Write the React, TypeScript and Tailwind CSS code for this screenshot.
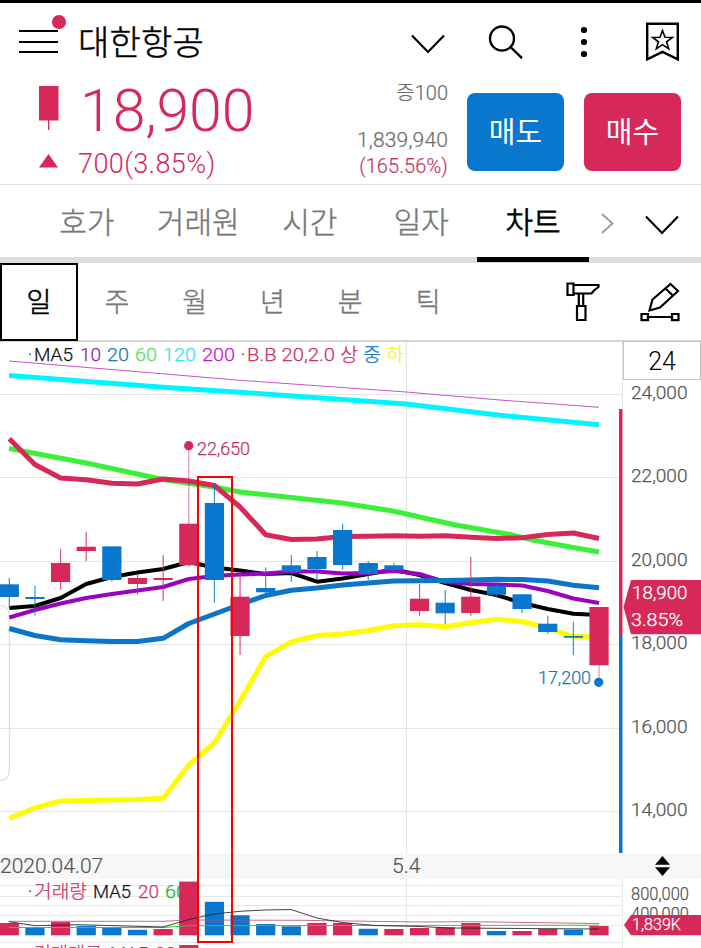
import React from 'react';

const RED = '#d62859';
const BLUE = '#0877cd';

const FONT = "font-['Roboto','Noto_Sans_CJK_KR',sans-serif]";

type Candle = {
  up: boolean;
  high: number;
  top: number;
  bottom: number;
  low: number;
  volume: number;
};

const c = (up: boolean, high: number, top: number, bottom: number, low: number, volume: number): Candle => ({
  up,
  high,
  top,
  bottom,
  low,
  volume,
});

// Vertical positions are in chart pixels, volume is the bar height
const CANDLES: Candle[] = [
  c(false, 578, 584.3, 597, 608, 12.3),
  c(false, 586, 597, 599, 615.5, 7.3),
  c(true, 549, 563, 582, 590, 13.3),
  c(true, 532, 546.7, 551, 561, 9.3),
  c(false, 546.4, 546.4, 580, 581.7, 7.3),
  c(true, 574, 578, 584, 594.7, 5.5),
  c(true, 555, 578, 580, 601, 6.3),
  c(true, 446, 523.7, 565.3, 567.3, 53.7),
  c(false, 484, 503, 580, 602.7, 33.5),
  c(true, 573, 596.7, 636, 655, 20),
  c(false, 567.3, 588, 592.3, 593, 11.3),
  c(false, 555, 565.3, 572, 582, 9),
  c(false, 551, 557, 569, 580, 12.3),
  c(false, 523.7, 530, 565, 569.5, 12.3),
  c(false, 561, 563, 574, 580, 6.5),
  c(false, 563, 565.3, 570, 572, 6.3),
  c(true, 584, 598.7, 611, 615.7, 7.3),
  c(false, 590, 602.7, 613.3, 623.7, 8),
  c(true, 557, 596.7, 613, 615.7, 12.3),
  c(false, 584, 586, 594.7, 596.5, 4.3),
  c(false, 594.3, 594.3, 609, 613, 4.3),
  c(false, 615.7, 623.7, 632, 634, 6.3),
  c(false, 621.7, 636, 637.7, 655, 5.7),
  c(true, 607, 607, 665.3, 682, 9.3),
];

const VOLUME_UP = [0, 2, 6, 7, 12, 13, 15, 16, 17, 18, 20, 21, 23];

const cx = (i: number) => 9.3 + i * 25.64;

const series = (ys: number[]) => ys.map((y, i) => `${cx(i).toFixed(1)},${y}`).join(' ');

const LINES = [
  {
    id: 'ma200',
    color: '#c455c8',
    width: 1,
    points: '9,361 157,373.3 240,380.3 406,392 500,400 599,407.3',
  },
  {
    id: 'ma120',
    color: '#00f6ff',
    width: 5,
    points: '9,375.6 163,387.3 240,392.3 406,404 500,415.3 599,424.7',
  },
  {
    id: 'ma60',
    color: '#3bf036',
    width: 5,
    points:
      '9,448.5 86,463 163,479.5 214,487 240,492 291,497.5 342,503 393,511 453,524.5 510,534.5 535,540.5 573,547.5 599,552',
  },
  {
    id: 'upper',
    color: RED,
    width: 5,
    points: series([
      438.7, 464.5, 478, 479.7, 483.3, 484, 479, 481, 485.5, 507, 534.7, 539.5, 539, 536.5, 536.3, 535.7, 536.3, 535.7,
      537.3, 538.5, 537.7, 534.5, 533, 538.5,
    ]),
  },
  {
    id: 'lower',
    color: '#fffb00',
    width: 5,
    points: series([
      818.3, 808, 801, 800.5, 800, 799.5, 798.3, 765, 743, 701, 656.7, 642, 635.5, 634, 630.5, 625.7, 624.7, 626.7, 622.7,
      619.3, 621.5, 628, 636.5, 637,
    ]),
  },
  {
    id: 'ma5',
    color: '#000000',
    width: 4,
    points: series([
      608, 606, 598, 584, 577, 572.5, 569, 562, 567.5, 570.5, 574, 573, 581.7, 578.5, 574, 569.5, 575, 583, 590, 595, 603,
      609, 613.7, 615,
    ]),
  },
  {
    id: 'ma10',
    color: '#9803c0',
    width: 4,
    points: series([
      617.5, 610, 603.5, 598, 594, 590.5, 587, 579, 576, 574.5, 573.5, 571.5, 571.5, 573.5, 573, 571, 574, 582, 584, 584.5,
      585.5, 591, 598.5, 603,
    ]),
  },
  {
    id: 'ma20',
    color: '#0d75c8',
    width: 5,
    points: series([
      628.5, 635.5, 639.7, 640.7, 641.5, 641.5, 638.3, 623.5, 614, 604.5, 595.5, 590.3, 588, 585, 583, 581, 580.7, 580.5,
      580, 579.3, 579.5, 581, 585.3, 587.7,
    ]),
  },
];

const PRICE_TICKS = [
  { label: '24,000', y: 394.4 },
  { label: '22,000', y: 477.6 },
  { label: '20,000', y: 561.2 },
  { label: '18,000', y: 644.5 },
  { label: '16,000', y: 728.3 },
  { label: '14,000', y: 811.4 },
];

const LEGEND = [
  { text: '·', x: 28, width: 4, color: '#111' },
  { text: 'MA5', x: 34, width: 39, color: '#111' },
  { text: '10', x: 80, width: 21, color: '#8a1fb0' },
  { text: '20', x: 107, width: 22, color: '#2377ba' },
  { text: '60', x: 135, width: 22, color: '#5ddd57' },
  { text: '120', x: 163, width: 33, color: '#35e6ee' },
  { text: '200', x: 202, width: 33, color: '#c913d0' },
  { text: '·', x: 241, width: 4, color: '#111' },
  { text: 'B.B 20,2.0', x: 247, width: 88, color: '#c9355f' },
  { text: '상', x: 340, width: 18, color: '#d62859' },
  { text: '중', x: 363, width: 18, color: '#0877cd' },
  { text: '하', x: 386, width: 18, color: '#f7f01c' },
];

const TABS = ['호가', '거래원', '시간', '일자', '차트'];
const PERIODS = ['일', '주', '월', '년', '분', '틱'];

interface LabelProps {
  x: number;
  y: number;
  width?: number;
  size?: number;
  color: string;
  children: React.ReactNode;
}

const Label: React.FC<LabelProps> = ({ x, y, width, size = 17.5, color, children }) => (
  <text
    x={x}
    y={y}
    fill={color}
    stroke={color}
    strokeWidth="0.25"
    fontSize={size}
    textLength={width}
    lengthAdjust="spacingAndGlyphs"
  >
    {children}
  </text>
);

const ChevronDown: React.FC = () => (
  <svg width="34" height="20" viewBox="0 0 34 20" fill="none" stroke="#000" strokeWidth="2.1">
    <path d="M1 1.5 17 18 33 1.5" />
  </svg>
);

const Header: React.FC = () => (
  <header className="flex h-[77px] items-center pr-[21px] pl-[19px]">
    <button className="relative flex h-[23px] w-[39px] flex-col justify-between">
      <span className="h-[2px] w-full bg-black" />
      <span className="h-[2px] w-full bg-black" />
      <span className="h-[2px] w-full bg-black" />
      <span className="absolute -top-[15.5px] -right-[8px] size-[14px] rounded-full bg-[#d62859]" />
    </button>
    <h1 className="mt-[2px] ml-[20px] w-[333px] text-[34px] leading-[40px] font-light tracking-[0.2px] text-black [-webkit-text-stroke:0.5px]">
      대한항공
    </h1>
    <span className="mt-[4px]">
      <ChevronDown />
    </span>
    <svg className="ml-[43px]" width="35" height="34" viewBox="0 0 35 34" fill="none" stroke="#000" strokeWidth="2.4">
      <circle cx="14" cy="13.5" r="12" />
      <path d="M22.5 22 34 33.2" />
    </svg>
    <svg className="ml-[57px]" width="8" height="32" viewBox="0 0 8 32">
      <circle cx="4" cy="4" r="3.1" />
      <circle cx="4" cy="16" r="3.1" />
      <circle cx="4" cy="28" r="3.1" />
    </svg>
    <svg className="ml-auto" width="34" height="40" viewBox="0 0 34 40" fill="none" stroke="#000">
      <path strokeWidth="2.4" d="M1.2 1.7H31.8V37.3L16.5 29.8 1.2 37.3Z" />
      <path
        strokeWidth="1.6"
        d="M16.5 8.5 19 15.2 26.4 15.4 20.6 19.8 22.7 26.8 16.5 22.7 10.3 26.8 12.4 19.8 6.6 15.4 14 15.2Z"
      />
    </svg>
  </header>
);

const Quote: React.FC = () => (
  <section className="flex h-[105px] border-b border-[#e2e2e2]">
    <div className="w-[300px] text-[#d62859]">
      <div className="flex h-[60px] items-center">
        <svg className="-mt-[2px] ml-[39px]" width="20" height="46" viewBox="0 0 20 46" fill="#d62859">
          <path d="M0 0H19.5V34.5H10.3V44H9V34.5H0Z" />
        </svg>
        <span className="mt-[2px] ml-[21px] text-[59px] leading-[60px] font-light tracking-[-0.1px]">18,900</span>
      </div>
      <div className="flex h-[44px] items-center">
        <svg className="-mt-[3px] ml-[39px]" width="19" height="14" viewBox="0 0 19 14" fill="#d62859">
          <path d="M9.5 0 19 13.5H0Z" />
        </svg>
        <span className="mt-[3px] ml-[20px] text-[27px] leading-[40px] font-light tracking-[0.4px]">700(3.85%)</span>
      </div>
    </div>
    <div className="w-[148px] pt-px text-right font-light text-[#6b6b6b] [-webkit-text-stroke:0.2px]">
      <p className="h-[46px] text-[20px] leading-[24px]">증100</p>
      <p className="text-[21px] leading-[27px] tracking-[0.15px]">1,839,940</p>
      <p className="text-[20px] leading-[24px] tracking-[0.1px] text-[#c9355f]">(165.56%)</p>
    </div>
    <button className="mt-[13px] ml-[19px] h-[78px] w-[97px] rounded-[8px] bg-[#0877cd] pt-[4px] text-[29px] text-white">
      매도
    </button>
    <button className="mt-[13px] ml-[20px] h-[78px] w-[97px] rounded-[8px] bg-[#d62859] pt-[4px] text-[29px] text-white">
      매수
    </button>
  </section>
);

const Tabs: React.FC = () => (
  <nav className="flex h-[78px] border-b-[6px] border-[#dddddd] pl-[31px] [-webkit-text-stroke:0.4px]">
    {TABS.map((tab) =>
      tab === '차트' ? (
        <button
          key={tab}
          className="-mb-[5px] h-[77px] w-[112px] border-b-[5px] border-black pt-[3px] text-[30px] leading-[69px] font-light [-webkit-text-stroke:0.8px]"
        >
          {tab}
        </button>
      ) : (
        <button key={tab} className="h-[72px] w-[111.5px] pt-[3px] text-[30px] leading-[69px] font-light text-[#777]">
          {tab}
        </button>
      )
    )}
    <div className="flex h-[76px] flex-1 items-center pl-[12px]">
      <svg width="13" height="21" viewBox="0 0 13 21" fill="none" stroke="#999" strokeWidth="1.8">
        <path d="M1 1 11.5 10.5 1 20" />
      </svg>
      <span className="mt-[4px] ml-[31px]">
        <ChevronDown />
      </span>
    </div>
  </nav>
);

const Periods: React.FC = () => (
  <div className="flex h-[79px] items-start border-b-2 border-[#d4d4d4]">
    {PERIODS.map((period, i) => (
      <button
        key={period}
        className={
          i === 0
            ? 'h-[78px] w-[78px] border-2 border-black pt-[2px] text-[27px] font-light text-black [-webkit-text-stroke:0.6px]'
            : 'h-[78px] w-[77.8px] pt-[2px] text-[27px] font-light text-[#777] [-webkit-text-stroke:0.4px]'
        }
      >
        {period}
      </button>
    ))}
    <svg className="mt-[19px] ml-[99.5px]" width="34" height="40" viewBox="0 0 34 40" fill="none" stroke="#000" strokeWidth="2.2">
      <path d="M1.5 1.5H7.5V13H1.5Z" />
      <path d="M7.5 3H32.5V5L28 8.5 25.5 11.5H7.5" />
      <path d="M12.8 11.5V24M17.2 11.5V24" />
      <path d="M11 24H19.5V38H11Z" />
    </svg>
    <svg className="mt-[19px] ml-[40px]" width="40" height="40" viewBox="0 0 40 40" fill="none" stroke="#000" strokeWidth="2.2">
      <path d="M30.5 2 38 9 20 25.5 9.5 28.5 12.5 17.5Z" />
      <path d="M25.5 6.5 32.8 13.5" />
      <path d="M1.5 32H8V38.2H1.5ZM32 32H38.5V38.2H32ZM8 35H32" />
    </svg>
  </div>
);

const PriceChart: React.FC = () => (
  <div className="relative h-[511px]">
    <svg className="block font-light" width="701" height="511" viewBox="0 342 701 511">
      <g stroke="#e5e5e5" strokeWidth="1">
        {PRICE_TICKS.map((tick) => (
          <path key={tick.label} d={`M0 ${Math.floor(tick.y)}.5H622`} />
        ))}
        <path d="M406.5 342V853M622.5 342V409" />
      </g>
      <path d="M0 605.5Q9.3 606 9.3 615V771Q9.3 780 0 780.5" fill="none" stroke="#dedede" strokeWidth="1.2" />

      {LINES.map((line) => (
        <polyline
          key={line.id}
          points={line.points}
          fill="none"
          stroke={line.color}
          strokeWidth={line.width}
          strokeLinejoin="round"
        />
      ))}

      {CANDLES.map((candle, i) => {
        const color = candle.up ? RED : BLUE;
        return (
          <g key={i} fill={color}>
            <rect
              x={cx(i) - 0.6}
              y={candle.high}
              width="1.2"
              height={candle.low - candle.high}
              fillOpacity={i === 7 || i === 23 ? 0.5 : 0.8}
            />
            <rect x={cx(i) - 9.6} y={candle.top} width="19.2" height={candle.bottom - candle.top} />
          </g>
        );
      })}
      <circle cx="188.7" cy="445.7" r="4.6" fill={RED} />
      <circle cx="598.7" cy="682.3" r="4.6" fill={BLUE} />
      <Label x={197} y={455} width={53} color="#b8345a">22,650</Label>
      <Label x={538} y={683.5} width={53} color="#1f74b5">17,200</Label>

      {LEGEND.map((item) => (
        <Label key={item.x} x={item.x} y={361} width={item.width} size={18} color={item.color}>
          {item.text}
        </Label>
      ))}

      <rect x="619" y="409" width="3.5" height="227" fill={RED} />
      <rect x="619" y="636" width="3.5" height="217" fill={BLUE} />
      {PRICE_TICKS.map((tick) => (
        <Label key={tick.label} x={631} y={tick.y + 4.8} width={56.5} color="#555">
          {tick.label}
        </Label>
      ))}
      <path d="M623.5 607 631 580H701V634.3H631Z" fill={RED} />
      <Label x={632} y={599} width={55.5} color="#fff">18,900</Label>
      <Label x={631} y={626} width={52} color="#fff">3.85%</Label>
    </svg>
    <div className="absolute -top-px right-0 h-[39px] w-[78px] border border-[#c4c4c4] text-center text-[25px] leading-[39px] font-light text-black">
      24
    </div>
  </div>
);

const DateBar: React.FC = () => (
  <div className="flex h-[26px] items-center bg-[#f7f7f7] text-[21px] font-light text-[#555] [-webkit-text-stroke:0.2px]">
    <span className="mt-[2px] w-[392px]">2020.04.07</span>
    <span className="mt-[2px] w-[263px]">5.4</span>
    <svg width="15" height="20" viewBox="0 0 15 20">
      <path d="M7.5 0 15 8.7H0ZM7.5 20 15 11.3H0Z" />
    </svg>
  </div>
);

const VolumeChart: React.FC = () => (
  <svg className="block font-light" width="701" height="69" viewBox="0 879 701 69">
    <path
      d="M0 885.5H622M0 896.5H622M0 905.5H622M0 915.5H622M0 925.5H622M0 942.5H622M406.5 879V942M622.5 879V948"
      stroke="#e8e8e8"
      strokeWidth="1"
    />
    <Label x={28} y={898} width={4} size={18} color="#111">·</Label>
    <Label x={34} y={898} width={53} size={18} color="#c9355f">거래량</Label>
    <Label x={93} y={898} width={38} size={18} color="#111">MA5</Label>
    <Label x={138} y={898} width={21} size={18} color="#c9355f">20</Label>
    <Label x={165} y={898} width={22} size={18} color="#22bb22">60</Label>
    {CANDLES.map((candle, i) => (
      <rect
        key={i}
        x={cx(i) - 9.6}
        y={935.3 - candle.volume}
        width="19.2"
        height={candle.volume}
        fill={VOLUME_UP.includes(i) ? RED : BLUE}
      />
    ))}
    <g fill="none" strokeWidth="1">
      <polyline points="9,921.3 163,921.3 189,920 300,920.3 420,922 470,921.7 599,923.5" stroke="#b84a72" strokeOpacity="0.8" />
      <polyline points="9,927.5 163,927.5 189,925.7 599,925.2" stroke="#3fc243" />
      <polyline
        points="9,921.7 35,925.7 78,924.7 163,927 189,919.5 214,914 240,911.3 265,910 291,909.5 317,918 342,922.5 375,925.5 420,926.5 450,928 599,929"
        stroke="#222"
        strokeOpacity="0.85"
      />
    </g>
    <Label x={34} y={959.5} width={68} size={18} color="#c9355f">거래대금</Label>
    <Label x={110} y={959.5} width={38} size={18} color="#555">MA5</Label>
    <Label x={155} y={959.5} width={21} size={18} color="#c9355f">20</Label>
    <rect x="179.2" y="945" width="19.2" height="4" fill={RED} />

    <Label x={631} y={900.3} width={58} color="#555">800,000</Label>
    <Label x={631} y={920} width={58} color="#555">400,000</Label>
    <path d="M624 925 631 915H701V935.3H631Z" fill={RED} />
    <Label x={632} y={929.5} width={49} size={16.5} color="#fff">1,839K</Label>
  </svg>
);

const App: React.FC = () => {
  return (
    <div className={`relative h-[948px] w-[701px] overflow-hidden border-t-[3px] border-black bg-white ${FONT}`}>
      <Header />
      <Quote />
      <Tabs />
      <Periods />
      <PriceChart />
      <DateBar />
      <VolumeChart />
      {/* Highlighted candle */}
      <div className="absolute top-[473px] left-[197px] h-[467px] w-[36px] border-2 border-[#ff0000]" />
    </div>
  );
};

export default App;
